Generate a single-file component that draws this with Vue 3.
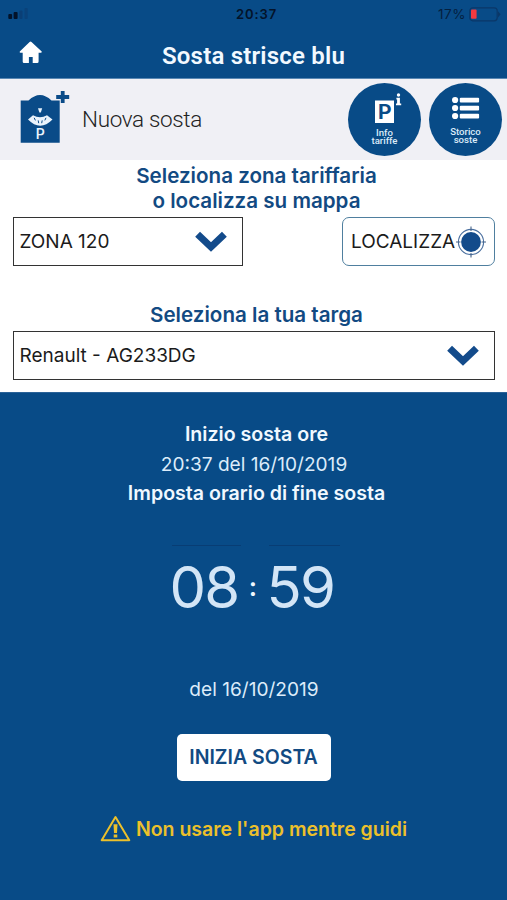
<script setup>
import { ref } from 'vue'

const zone = ref('ZONA 120')
const plate = ref('Renault - AG233DG')
const date = '16/10/2019'
const startTime = '20:37'
const hours = '08'
const minutes = '59'
</script>

<template>
  <main class="screen">
    <header class="top">
      <div class="status">
        <svg class="signal" width="22" height="12" viewBox="0 0 22 12">
          <rect x="0.3" y="6" width="3.8" height="5" rx="1" fill="#03132a" />
          <rect x="5.6" y="4" width="4" height="7" rx="1" fill="#03132a" />
          <rect x="11.3" y="2.5" width="3.2" height="8.5" rx="1" fill="#0a3f76" />
          <rect x="16.5" y="0" width="3.2" height="11" rx="1" fill="#0a427a" />
        </svg>
        <span class="clock">20:37</span>
        <span class="percent">17%</span>
        <svg class="battery" width="32" height="15" viewBox="0 0 32 15">
          <rect x="0.8" y="0.8" width="27.4" height="13" rx="3" fill="none" stroke="#0a3768" stroke-width="1.2" />
          <rect x="2" y="2.4" width="5.6" height="9.4" rx="1" fill="#f23a41" />
          <path d="M29 4.2L31.6 7.3L29 10.4Z" fill="#0a3768" />
        </svg>
      </div>
      <div class="nav">
        <svg class="home" width="24" height="23" viewBox="0 0 24 23">
          <path d="M11.5 0.4Q12 0.4 12.5 0.9L22.7 10.6Q23.2 11.5 22 11.8H19.6V20.5Q19.6 22 18.2 22H13.7V15.9H9.9V22H5Q3.7 22 3.7 20.7V11.8H1.3Q0.2 11.4 0.8 10.5L10.6 0.9Q11 0.4 11.5 0.4Z" fill="#fff" />
        </svg>
        <h1>Sosta strisce blu</h1>
      </div>
    </header>

    <section class="toolbar">
      <svg class="disc" width="50" height="54" viewBox="0 0 50 54">
        <path d="M0.7 9.5H8.5Q20 -1.5 31.5 9.5H39.7V51.8H0.7Z" fill="#0a4b88" />
        <path d="M42.7 0V12M36.2 6H49.2" stroke="#0a4b88" stroke-width="3.8" />
        <path d="M8 28.6L13 24.2Q20 28.2 27 24.2L32.5 28.6Q20.2 41 8 28.6Z" fill="#eaf3fc" />
        <path d="M14.2 26.8L15.4 29.4M26 26.8L24.8 29.4M18.2 29.4L18.7 32.2M22.2 29.4L21.7 32.2" stroke="#0a4b88" stroke-width="1" />
        <path d="M18 17.3H22.2L20.8 21.6H19.4Z" fill="#eaf3fc" />
        <text x="20.2" y="48" text-anchor="middle" class="disc-p">P</text>
      </svg>
      <h2>Nuova sosta</h2>
      <button class="round">
        <svg class="info-icon" width="30" height="33" viewBox="0 0 30 33">
          <rect x="1" y="7.5" width="19" height="22.5" fill="#fff" />
          <text x="10.7" y="26" text-anchor="middle" class="info-p">P</text>
          <path d="M22.4 4.8H25.9V10.4H27.2V12.3H22V10.4H23.1V6.6H22.4Z" fill="#fff" />
          <circle cx="24.5" cy="2" r="1.7" fill="#fff" />
        </svg>
        <span class="info-label">Info<br>tariffe</span>
      </button>
      <button class="round">
        <svg width="30" height="33" viewBox="0 0 30 33">
          <g fill="#fff">
            <circle cx="4.1" cy="7" r="3.1" /><circle cx="4.1" cy="15" r="3.1" /><circle cx="4.1" cy="23" r="3.1" />
            <rect x="8.8" y="4.7" width="19.3" height="4.7" rx="1" />
            <rect x="8.8" y="12.7" width="19.3" height="4.7" rx="1" />
            <rect x="8.8" y="20.7" width="19.3" height="4.7" rx="1" />
          </g>
        </svg>
        <span class="history-label">Storico<br>soste</span>
      </button>
    </section>

    <section class="choices">
      <p class="label">Seleziona zona tariffaria<br>o localizza su mappa</p>
      <div class="zone-row">
        <button class="select zone">
          <span>{{ zone }}</span>
          <svg width="32" height="22" viewBox="0 0 32 22"><path d="M2.6 3.2L16 16L29.4 3.2" fill="none" stroke="#134b8b" stroke-width="7" /></svg>
        </button>
        <button class="locate">
          <span>LOCALIZZA</span>
          <svg width="30" height="32" viewBox="0 0 30 32">
            <circle cx="15" cy="16" r="12.6" fill="none" stroke="#4a6f9f" stroke-width="1.1" />
            <path d="M15 0.5V5M15 27V31.5M0 16H4.5M25.5 16H30" stroke="#47658a" stroke-width="1.1" />
            <circle cx="15" cy="16" r="9.9" fill="#134b8b" />
          </svg>
        </button>
      </div>
      <p class="label plate-label">Seleziona la tua targa</p>
      <button class="select plate">
        <span>{{ plate }}</span>
        <svg width="32" height="22" viewBox="0 0 32 22"><path d="M2.6 3.2L16 16L29.4 3.2" fill="none" stroke="#134b8b" stroke-width="7" /></svg>
      </button>
    </section>

    <section class="session">
      <p class="strong">Inizio sosta ore</p>
      <p class="start-time">{{ startTime }} del {{ date }}</p>
      <p class="strong">Imposta orario di fine sosta</p>
      <div class="picker">
        <span class="digits">{{ hours }}</span>
        <span class="colon">:</span>
        <span class="digits">{{ minutes }}</span>
      </div>
      <p class="end-date">del {{ date }}</p>
      <button class="begin">INIZIA SOSTA</button>
      <p class="warning">
        <svg width="31" height="27" viewBox="0 0 31 27">
          <path d="M15.5 2L29.3 25.2H1.7Z" fill="none" stroke="#ecc02b" stroke-width="2" stroke-linejoin="round" />
          <path d="M13.5 9.3H17.5L17 18H14ZM13.7 19.4H17.3V22.5H13.7Z" fill="#ecc02b" />
        </svg>
        <span>Non usare l'app mentre guidi</span>
      </p>
    </section>
  </main>
</template>

<style>
body {
  margin: 0;
  background: #084b87;
}
</style>

<style scoped>
.screen {
  display: flex;
  flex-direction: column;
  width: 507px;
  height: 900px;
  overflow: hidden;
  background: #fff;
  font-family: Inter, "Liberation Sans", sans-serif;
}
.screen * {
  box-sizing: border-box;
}
h1, h2, p {
  margin: 0;
  white-space: nowrap;
}
button {
  border: 0;
  padding: 0;
  font-family: inherit;
  white-space: nowrap;
}
svg {
  display: block;
  flex: none;
}
.top {
  height: 79px;
  background: #084b87;
  border-bottom: 1px solid #5a88b4;
}
.status {
  display: grid;
  grid-template-columns: 228px 202px 38px 1fr;
  align-items: center;
  height: 28px;
  font-size: 13px;
  line-height: 28px;
}
.signal {
  margin-left: 8px;
}
.clock {
  padding-left: 8px;
  color: #03132a;
  font-weight: 600;
  letter-spacing: 0.9px;
}
.percent {
  padding-left: 8px;
  color: #04203f;
  font-size: 13.5px;
  letter-spacing: 0.6px;
}
.battery {
  margin-left: 1px;
}
.nav {
  display: grid;
  grid-template-columns: 100px 307px 100px;
  height: 50px;
}
.home {
  margin: 13px 0 0 18.5px;
}
h1 {
  height: 56px;
  line-height: 56px;
  text-align: center;
  font-family: Roboto, sans-serif;
  font-size: 24px;
  font-weight: 600;
  letter-spacing: 0.2px;
  color: #f2f9ff;
}
.toolbar {
  display: flex;
  height: 81px;
  background: #f0f0f5;
}
.disc {
  margin: 12px 0 0 20px;
}
.disc-p {
  font: 500 14px Roboto, sans-serif;
  fill: #eaf3fc;
}
h2 {
  flex: none;
  width: 278px;
  padding-left: 12px;
  line-height: 81px;
  font-family: Roboto, sans-serif;
  font-size: 22.5px;
  font-weight: 300;
  letter-spacing: -0.35px;
  color: #222;
}
.round {
  display: flex;
  flex-direction: column;
  align-items: center;
  flex: none;
  width: 73px;
  height: 73px;
  margin: 4px 8px 0 0;
  padding-top: 10px;
  border-radius: 50%;
  background: #084b87;
  color: #dcecf9;
  font: 500 9.6px/8px Roboto, sans-serif;
}
.info-icon {
  margin-left: 8px;
}
.info-p {
  font: 700 21px Roboto, sans-serif;
  fill: #084b87;
}
.info-label {
  margin-top: 3px;
}
.history-label {
  margin-top: 2px;
}
.choices {
  height: 232px;
  padding: 3px 12px 0 13px;
}
.label {
  padding-left: 5px;
  text-align: center;
  color: #124a82;
  font-size: 20.6px;
  font-weight: 600;
  line-height: 25px;
}
.zone-row {
  display: flex;
  justify-content: space-between;
  margin-top: 4px;
}
.select {
  display: flex;
  align-items: center;
  justify-content: space-between;
  height: 49px;
  padding: 0 15px 0 5.5px;
  border: 1.5px solid #333;
  background: #fff;
  color: #1b1b1b;
  font-size: 19px;
}
.zone {
  width: 230px;
}
.locate {
  display: flex;
  align-items: center;
  justify-content: space-between;
  width: 153px;
  height: 49px;
  padding: 0 8px 0 8px;
  border: 1.5px solid #4f7f9f;
  border-radius: 7px;
  background: #fff;
  color: #1b1b1b;
  font-size: 19px;
}
.plate-label {
  margin-top: 36px;
}
.plate {
  width: 482px;
  margin-top: 4px;
}
.session {
  display: flex;
  flex-direction: column;
  align-items: center;
  flex: 1;
  padding-top: 27px;
  border-top: 1px solid #2a6298;
  background: #084b87;
  color: #f0f8ff;
}
.session p {
  font-size: 19.1px;
  line-height: 29.5px;
}
.session .strong {
  padding-left: 6px;
  font-size: 19.6px;
  font-weight: 600;
}
.start-time, .end-date {
  padding-left: 1px;
  color: #dcecfa;
}
.picker {
  display: grid;
  grid-template-columns: 69px 28px 71px;
  width: 168px;
  height: 84px;
  margin: 36px 0 0 4px;
}
.digits {
  border-top: 1px solid #083d74;
  color: #d3e5f6;
  font-size: 58px;
  font-weight: 400;
  line-height: 82px;
  letter-spacing: -1.8px;
  text-indent: -2px;
}
.colon {
  padding-right: 3px;
  font-size: 26px;
  font-weight: 600;
  line-height: 84px;
  text-align: center;
}
.session .end-date {
  margin-top: 46px;
}
.begin {
  width: 154px;
  height: 47px;
  margin-top: 30px;
  padding-bottom: 1px;
  border-radius: 5px;
  background: #fff;
  color: #124a82;
  font-size: 19.5px;
  font-weight: 600;
}
.session .warning {
  display: flex;
  align-items: center;
  gap: 5px;
  margin-top: 34px;
  color: #ecc02b;
  font-size: 19.5px;
  font-weight: 600;
}
.warning svg {
  margin-bottom: 3px;
}
</style>
